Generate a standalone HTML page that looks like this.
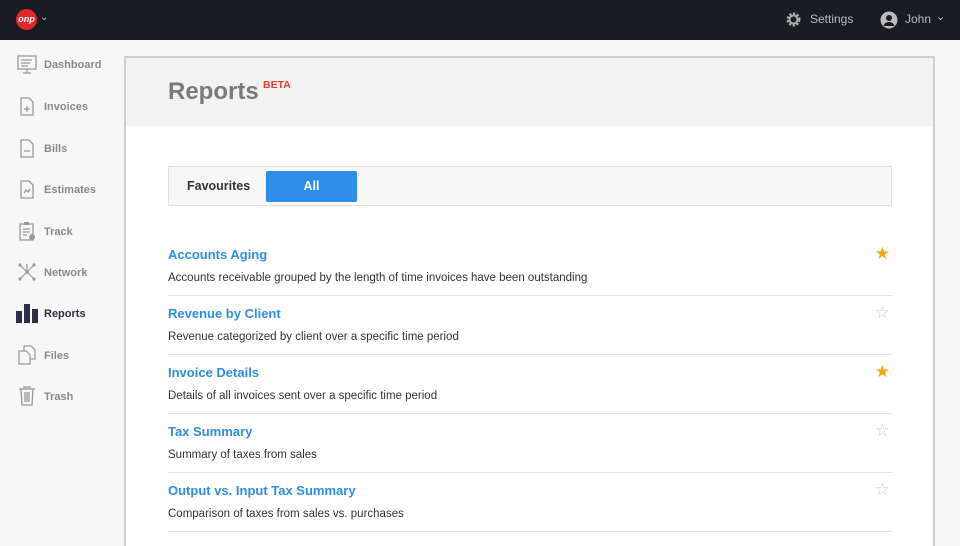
<!DOCTYPE html>
<html style="height:546px;overflow:hidden"><head><style>
*{margin:0;padding:0;box-sizing:border-box}
body{width:960px;height:546px;overflow:hidden;background:#f8f8f8;font-family:"Liberation Sans",sans-serif;position:relative}
.top{position:absolute;left:0;top:0;width:960px;height:40px;background:#1a1c24}
.logo{position:absolute;left:16px;top:9px;width:21px;height:21px;border-radius:50%;background:#e3262b;color:#fff;font:italic bold 9px "Liberation Sans";text-align:center;line-height:21px}
.side{position:absolute;left:0;top:40px;width:124px;bottom:0;background:#f7f7f7}
.it{position:absolute;left:44px;top:1px;font-size:11px;font-weight:bold;color:#8a8a8a}
.ic{position:absolute;left:17px;width:20px;height:20px}
.panel{position:absolute;left:124px;top:56px;width:811px;height:500px;border:2px solid #cfcfcf;border-bottom:none;background:#fff}
.ph{height:68px;background:#f2f2f2}
.row{position:absolute;left:42px;width:724px;height:59px;border-bottom:1px solid #e3e3e3}
.row a{position:absolute;left:0;top:10px;font-size:13px;color:#2e8de6;font-weight:bold;text-decoration:none}
.row p{position:absolute;left:0;top:35px;font-size:11.5px;color:#333}
.row .s{position:absolute;right:2px;top:7px;font-size:17px}
</style></head><body>
<div class="top">
<div class="logo">onp</div>
<div style="position:absolute;left:40px;top:12px;color:#bbb;font-size:10px">&#8964;</div>
<svg style="position:absolute;left:785px;top:11px" width="17" height="17" viewBox="0 0 17 17"><circle cx="8.5" cy="8.5" r="5.5" fill="none" stroke="#aaa" stroke-width="3" stroke-dasharray="2.2 1.4"/><circle cx="8.5" cy="8.5" r="4" fill="none" stroke="#aaa" stroke-width="2"/></svg>
<div style="position:absolute;left:810px;top:12px;color:#bbb;font-size:12px">Settings</div>
<svg style="position:absolute;left:880px;top:11px" width="18" height="18" viewBox="0 0 18 18"><circle cx="9" cy="9" r="8.5" fill="#bbb"/><circle cx="9" cy="7" r="3" fill="#1a1c24"/><path d="M3.5 15c1-3 3-4 5.5-4s4.5 1 5.5 4" fill="#1a1c24"/></svg>
<div style="position:absolute;left:905px;top:12px;color:#bbb;font-size:12px">John</div>
<div style="position:absolute;left:936px;top:10px;color:#bbb;font-size:11px">&#8964;</div>
</div>
<div class="side">
<svg class="ic" style="top:15px" viewBox="0 0 20 20"><rect x="1" y="1" width="18" height="13" fill="none" stroke="#999" stroke-width="1.3"/><path d="M4 5h11M4 8h9M4 11h7M6 18h8M10 14v4" stroke="#999" stroke-width="1.3"/></svg>
<div class="it" style="top:19px">Dashboard</div>
<svg class="ic" style="top:56px" viewBox="0 0 20 20"><path d="M4 2h8l4 4v13H4z" fill="none" stroke="#999" stroke-width="1.3"/><path d="M10 10v6M7 13h6" stroke="#999" stroke-width="1.3"/></svg>
<div class="it" style="top:61px">Invoices</div>
<svg class="ic" style="top:98px" viewBox="0 0 20 20"><path d="M4 2h8l4 4v13H4z" fill="none" stroke="#999" stroke-width="1.3"/><path d="M7 13h6" stroke="#999" stroke-width="1.3"/></svg>
<div class="it" style="top:103px">Bills</div>
<svg class="ic" style="top:139px" viewBox="0 0 20 20"><path d="M4 2h8l4 4v13H4z" fill="none" stroke="#999" stroke-width="1.3"/><path d="M7 14l2-3 2 2 2-3" fill="none" stroke="#999" stroke-width="1.3"/></svg>
<div class="it" style="top:144px">Estimates</div>
<svg class="ic" style="top:181px" viewBox="0 0 20 20"><rect x="3" y="3" width="13" height="16" fill="none" stroke="#999" stroke-width="1.3"/><rect x="7" y="1" width="5" height="3" fill="#999"/><path d="M6 8h7M6 11h7M6 14h4" stroke="#999" stroke-width="1.2"/><circle cx="15" cy="16" r="3" fill="#999"/></svg>
<div class="it" style="top:186px">Track</div>
<svg class="ic" style="top:222px" viewBox="0 0 20 20"><path d="M3 3l14 14M17 3L3 17M10 10L10 2" stroke="#999" stroke-width="1.2"/><circle cx="3" cy="3" r="1.6" fill="#999"/><circle cx="17" cy="3" r="1.6" fill="#999"/><circle cx="3" cy="17" r="1.6" fill="#999"/><circle cx="17" cy="17" r="1.6" fill="#999"/><circle cx="10" cy="10" r="1.8" fill="#999"/></svg>
<div class="it" style="top:227px">Network</div>
<svg class="ic" style="top:263px;left:16px;width:23px" viewBox="0 0 23 20"><rect x="0" y="8" width="6" height="12" fill="#2b3144"/><rect x="8" y="1" width="6" height="19" fill="#2b3144"/><rect x="16" y="6" width="6" height="14" fill="#2b3144"/></svg>
<div class="it" style="top:268px;color:#2b3144">Reports</div>
<svg class="ic" style="top:305px" viewBox="0 0 20 20"><path d="M7 1h7l4 4v9H7z" fill="#f7f7f7" stroke="#999" stroke-width="1.2"/><path d="M2 6h7l4 4v9H2z" fill="#f7f7f7" stroke="#999" stroke-width="1.2"/></svg>
<div class="it" style="top:310px">Files</div>
<svg class="ic" style="top:346px" viewBox="0 0 20 20"><path d="M2 3h16M7 3V1h6v2M4 3l1 16h10l1-16M8 6v10M10 6v10M12 6v10" fill="none" stroke="#999" stroke-width="1.3"/></svg>
<div class="it" style="top:351px">Trash</div>
</div>
<div class="panel">
<div class="ph"><div style="position:absolute;left:42px;top:20px;font-size:24px;font-weight:bold;color:#7a7a7a">Reports</div><div style="position:absolute;left:137px;top:21px;font-size:10.5px;font-weight:bold;color:#e53d2f">BETA</div></div>
<div style="position:absolute;left:42px;top:108px;width:724px;height:40px;background:#f7f7f7;border:1px solid #e0e0e0">
<div style="position:absolute;left:18px;top:12px;font-size:12.5px;font-weight:bold;color:#333">Favourites</div>
<div style="position:absolute;left:97px;top:4px;width:91px;height:31px;background:#2e8de6;border-radius:2px;color:#fff;font-size:12.5px;font-weight:bold;text-align:center;line-height:31px">All</div>
</div>
<div class="row" style="top:179px"><a>Accounts Aging</a><p>Accounts receivable grouped by the length of time invoices have been outstanding</p><span class="s" style="color:#f4a70f">★</span></div>
<div class="row" style="top:238px"><a>Revenue by Client</a><p>Revenue categorized by client over a specific time period</p><span class="s" style="color:#ccc">☆</span></div>
<div class="row" style="top:297px"><a>Invoice Details</a><p>Details of all invoices sent over a specific time period</p><span class="s" style="color:#f4a70f">★</span></div>
<div class="row" style="top:356px"><a>Tax Summary</a><p>Summary of taxes from sales</p><span class="s" style="color:#ccc">☆</span></div>
<div class="row" style="top:415px"><a>Output vs. Input Tax Summary</a><p>Comparison of taxes from sales vs. purchases</p><span class="s" style="color:#ccc">☆</span></div>
</div>
</body></html>
